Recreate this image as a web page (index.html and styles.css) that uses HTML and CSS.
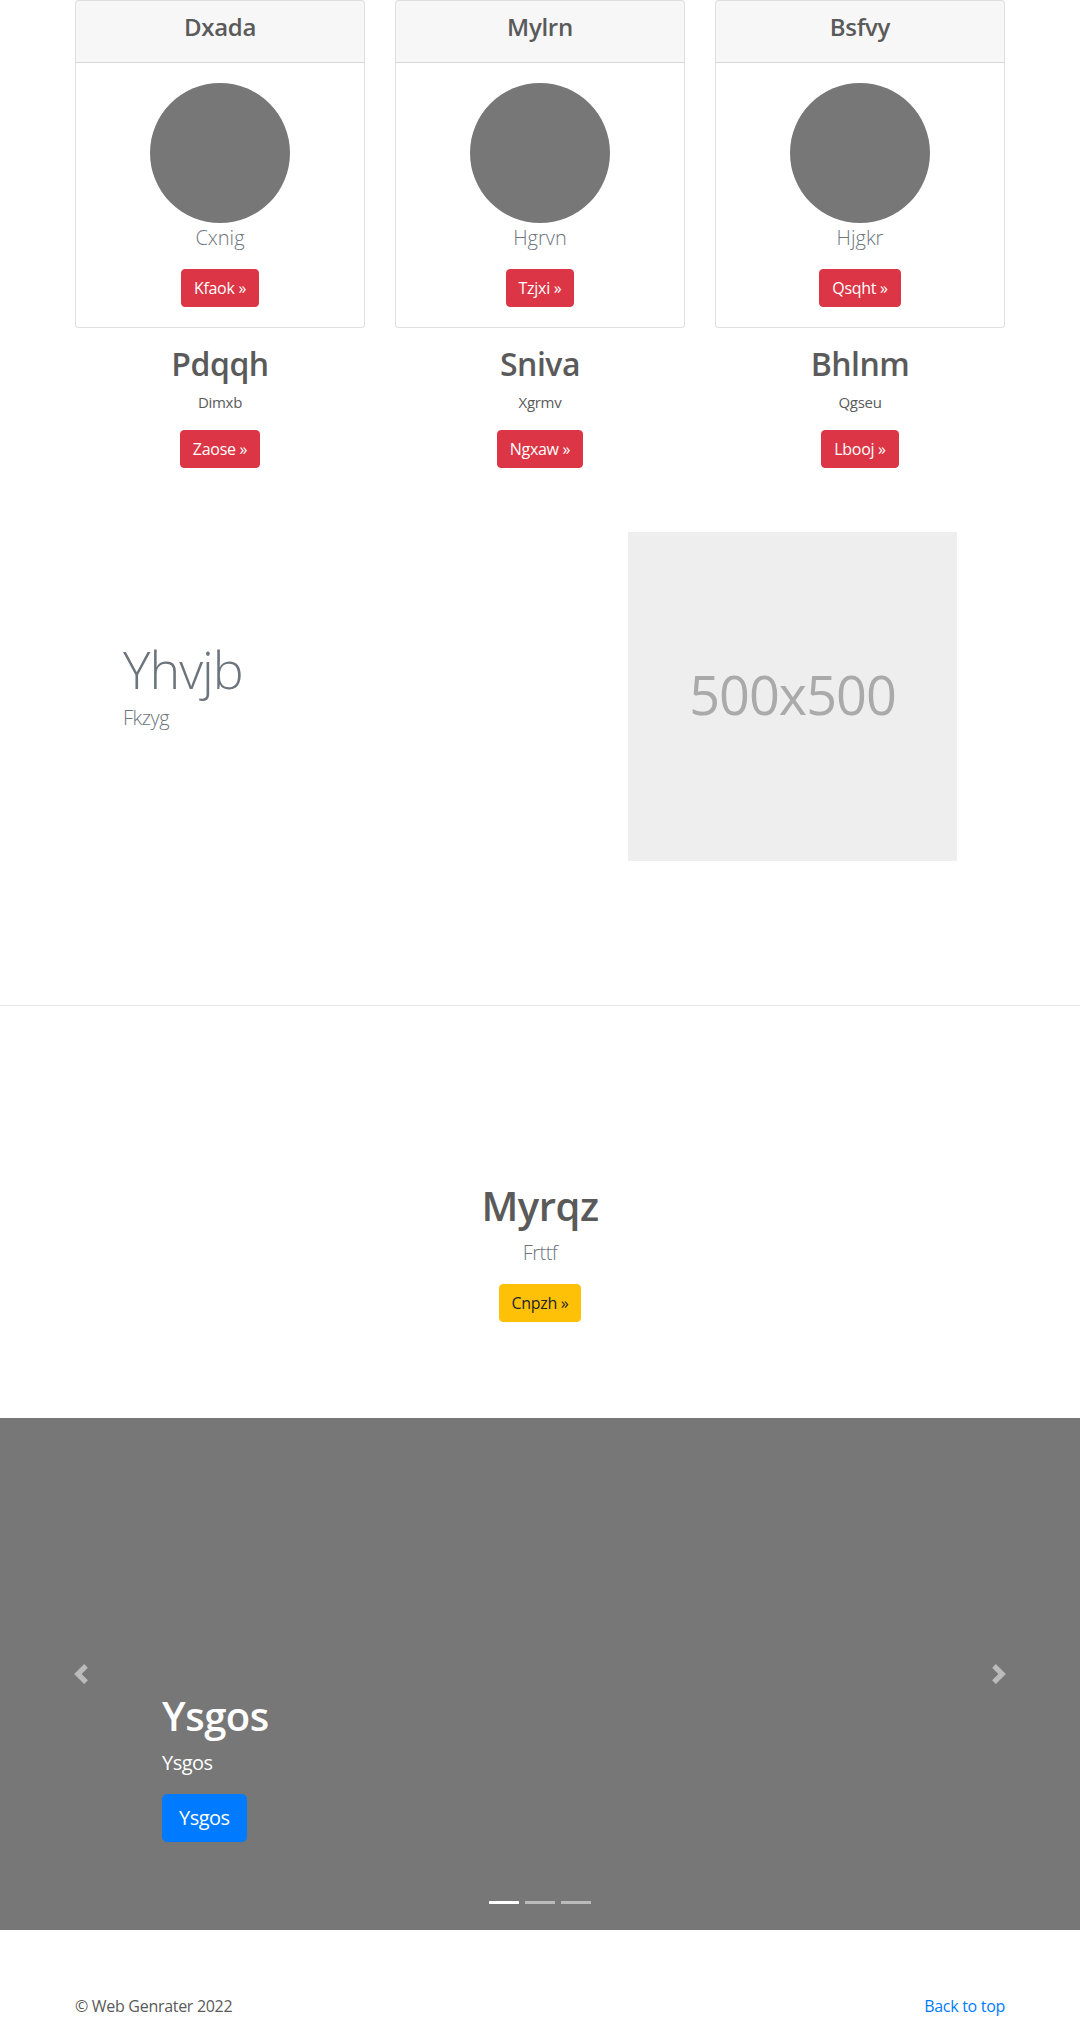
FILE: index.html
```html
<!DOCTYPE html>
<html lang="en">
<head>
<meta charset="utf-8">
<title>Page</title>
<link rel="stylesheet" href="styles.css">
</head>
<body>
<main>
  <section class="container cards">
    <div class="card">
      <div class="card-header"><h4 class="card-title">Dxada</h4></div>
      <div class="card-body">
        <div class="avatar"></div>
        <p class="lead">Cxnig</p>
        <a class="btn btn-danger" href="#">Kfaok &raquo;</a>
      </div>
    </div>
    <div class="card">
      <div class="card-header"><h4 class="card-title">Mylrn</h4></div>
      <div class="card-body">
        <div class="avatar"></div>
        <p class="lead">Hgrvn</p>
        <a class="btn btn-danger" href="#">Tzjxi &raquo;</a>
      </div>
    </div>
    <div class="card">
      <div class="card-header"><h4 class="card-title">Bsfvy</h4></div>
      <div class="card-body">
        <div class="avatar"></div>
        <p class="lead">Hjgkr</p>
        <a class="btn btn-danger" href="#">Qsqht &raquo;</a>
      </div>
    </div>
  </section>

  <section class="container marketing">
    <div class="mk-col">
      <h2 class="mk-title">Pdqqh</h2>
      <p class="mk-text">Dimxb</p>
      <p class="mk-action"><a class="btn btn-danger" href="#">Zaose &raquo;</a></p>
    </div>
    <div class="mk-col">
      <h2 class="mk-title">Sniva</h2>
      <p class="mk-text">Xgrmv</p>
      <p class="mk-action"><a class="btn btn-danger" href="#">Ngxaw &raquo;</a></p>
    </div>
    <div class="mk-col">
      <h2 class="mk-title">Bhlnm</h2>
      <p class="mk-text">Qgseu</p>
      <p class="mk-action"><a class="btn btn-danger" href="#">Lbooj &raquo;</a></p>
    </div>
  </section>

  <section class="container feature">
    <div class="feature-text">
      <h1 class="feature-title">Yhvjb</h1>
      <p class="feature-lead">Fkzyg</p>
    </div>
    <div class="placeholder"><span>500x500</span></div>
  </section>

  <hr class="divider">

  <section class="cta">
    <h1 class="cta-title">Myrqz</h1>
    <p class="lead cta-lead">Frttf</p>
    <a class="btn btn-warning" href="#">Cnpzh &raquo;</a>
  </section>

  <section class="carousel">
    <div class="caption">
      <h1 class="caption-title">Ysgos</h1>
      <p class="caption-text">Ysgos</p>
      <p class="caption-action"><a class="btn btn-lg btn-primary" href="#">Ysgos</a></p>
    </div>
    <a class="control control-prev" href="#">
      <svg width="20" height="20" viewBox="0 0 8 8" fill="#fff"><path d="M5.25 0l-4 4 4 4 1.5-1.5L4.25 4l2.5-2.5L5.25 0z"/></svg>
    </a>
    <a class="control control-next" href="#">
      <svg width="20" height="20" viewBox="0 0 8 8" fill="#fff"><path d="M2.75 0l-1.5 1.5L3.75 4l-2.5 2.5L2.75 8l4-4-4-4z"/></svg>
    </a>
    <ol class="indicators">
      <li class="active"></li>
      <li></li>
      <li></li>
    </ol>
  </section>

  <footer class="container footer">
    <p class="copy">&copy; Web Genrater 2022</p>
    <p class="back"><a href="#">Back to top</a></p>
  </footer>
</main>
</body>
</html>
```

FILE: styles.css
```css
* { box-sizing: border-box; }

html, body {
  margin: 0;
  padding: 0;
}

body {
  font-family: "Open Sans", "Noto Sans", sans-serif;
  font-size: 16px;
  line-height: 1.5;
  color: #5a5a5a;
  background: #fff;
}

h1, h2, h4 {
  margin: 0 0 8px;
  line-height: 1.2;
  font-weight: 600;
}

p { margin: 0 0 16px; }

a { color: #007bff; text-decoration: none; }

.container {
  width: 930px;
  margin: 0 auto;
}

/* buttons */
.btn {
  display: inline-block;
  padding: 6px 12px;
  font-size: 16px;
  line-height: 1.5;
  font-weight: 400;
  border: 1px solid transparent;
  border-radius: 4px;
  letter-spacing: -0.3px;
}
.btn-danger { background: #dc3545; border-color: #dc3545; color: #fff; }
.btn-warning { background: #ffc107; border-color: #ffc107; color: #212529; }
.btn-primary { background: #007bff; border-color: #007bff; color: #fff; }
.btn-lg {
  padding: 8px 16px;
  font-size: 20px;
  line-height: 1.5;
  border-radius: 5px;
}

.lead {
  font-size: 20px;
  font-weight: 300;
  color: #6c757d;
}

/* cards */
.cards {
  display: grid;
  grid-template-columns: repeat(3, 1fr);
  column-gap: 30px;
}
.card {
  border: 1px solid rgba(0, 0, 0, 0.125);
  border-radius: 4px;
  text-align: center;
  background: #fff;
  overflow: hidden;
}
.card-header {
  padding: 12px 20px;
  background: rgba(0, 0, 0, 0.03);
  border-bottom: 1px solid rgba(0, 0, 0, 0.125);
}
.card-title {
  font-size: 24px;
  letter-spacing: -0.3px;
}
.card-body { padding: 20px; }
.avatar {
  width: 140px;
  height: 140px;
  border-radius: 50%;
  background: #777;
  margin: 0 auto;
}

/* marketing */
.marketing {
  margin-top: 17px;
  display: grid;
  grid-template-columns: repeat(3, 1fr);
  column-gap: 30px;
  text-align: center;
}
.mk-title { font-size: 32px; letter-spacing: -0.5px; }
.mk-text { font-size: 15px; letter-spacing: -0.3px; }

/* feature */
.feature {
  display: flex;
  align-items: center;
  padding: 48px;
}
.feature-text { flex: 1; padding-bottom: 21px; }
.feature-title {
  font-size: 52px;
  font-weight: 300;
  color: #6c757d;
  letter-spacing: -1px;
  margin-bottom: 3px;
}
.feature-lead {
  font-size: 20px;
  font-weight: 300;
  color: #6c757d;
  margin: 0;
  letter-spacing: -0.5px;
}
.placeholder {
  width: 329px;
  height: 329px;
  background: #eee;
  color: #aaa;
  display: flex;
  align-items: center;
  justify-content: center;
  font-size: 54px;
  line-height: 1;
  letter-spacing: -1px;
  padding-bottom: 5px;
}

.divider {
  margin: 96px 0 0;
  border: 0;
  border-top: 1px solid rgba(0, 0, 0, 0.1);
  height: 0;
}

/* cta */
.cta {
  padding: 176px 0 96px;
  text-align: center;
}
.cta-title { font-size: 40px; font-weight: 600; letter-spacing: -0.5px; }
.cta-lead { letter-spacing: -0.5px; }

/* carousel */
.carousel {
  position: relative;
  height: 512px;
  background: #777;
  margin-bottom: 64px;
  display: flex;
  align-items: flex-end;
  padding: 0 162px 52px;
}
.caption {
  padding: 20px 0;
  color: #fff;
}
.caption-title { font-size: 40px; color: #fff; letter-spacing: -0.5px; }
.caption-text { font-size: 20px; letter-spacing: -0.5px; }
.caption-action .btn { letter-spacing: -0.5px; }

.control {
  position: absolute;
  top: 0;
  bottom: 0;
  width: 162px;
  display: flex;
  align-items: center;
  justify-content: center;
  opacity: 0.5;
}
.control-prev { left: 0; }
.control-next { right: 0; }
.control svg { display: block; }

.indicators {
  position: absolute;
  left: 0;
  right: 0;
  bottom: 0;
  margin: 0 0 16px;
  padding: 0;
  list-style: none;
  display: flex;
  justify-content: center;
}
.indicators li {
  box-sizing: content-box;
  width: 30px;
  height: 3px;
  margin: 0 3px;
  background: #fff;
  background-clip: padding-box;
  border-top: 10px solid transparent;
  border-bottom: 10px solid transparent;
  opacity: 0.5;
}
.indicators li.active { opacity: 1; }

/* footer */
.footer {
  display: flex;
  justify-content: space-between;
}
.footer p { letter-spacing: -0.3px; }
```
